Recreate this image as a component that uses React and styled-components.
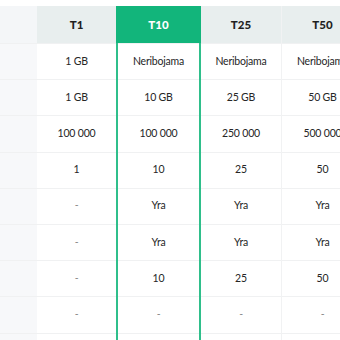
import React from "react";
import styled, { createGlobalStyle } from "styled-components";

const Global = createGlobalStyle`
  body {
    margin: 0;
    background: #fff;
    font-family: Lato, "Noto Sans", sans-serif;
    color: #2b2b2b;
  }
`;

const plans = [
  { name: "T1", values: ["1 GB", "1 GB", "100 000", "1", "-", "-", "-", "-", ""] },
  { name: "T10", values: ["Neribojama", "10 GB", "100 000", "10", "Yra", "Yra", "10", "-", ""], featured: true },
  { name: "T25", values: ["Neribojama", "25 GB", "250 000", "25", "Yra", "Yra", "25", "-", ""] },
  { name: "T50", values: ["Neribojama", "50 GB", "500 000", "50", "Yra", "Yra", "50", "-", ""] },
];

const Wrap = styled.div`
  width: 340px;
  height: 340px;
  overflow: hidden;
  padding-top: 6px;
  box-sizing: border-box;
`;

const Grid = styled.div`
  display: grid;
  grid-template-columns: 37px 79px 85px 81px 81px;
  width: 363px;
`;

const Column = styled.div`
  display: grid;
  grid-template-rows: 37px repeat(9, 36.2px);
  background: ${p => (p.$label ? "#f7f8fa" : "#fff")};
  border-left: ${p => (p.$featured ? "2px solid #2fbf8b" : "none")};
  border-right: ${p => (p.$featured ? "2px solid #2fbf8b" : p.$sep ? "1px solid #f1f2f3" : "none")};
`;

const Head = styled.div`
  display: flex;
  align-items: center;
  justify-content: center;
  font-size: 11.5px;
  font-weight: 900;
  color: ${p => (p.$featured ? "#fff" : "#1f1f1f")};
  background: ${p => (p.$featured ? "#12b57b" : p.$label ? "#f4f6f8" : "#e8eeee")};
  margin: ${p => (p.$featured ? "0 -2px" : "0")};
`;

const Cell = styled.div`
  display: flex;
  align-items: center;
  justify-content: center;
  padding-bottom: 2px;
  font-size: 10.5px;
  letter-spacing: -0.2px;
  color: ${p => (p.$dash ? "#8a8a8a" : "#262626")};
  border-top: 1px solid #f0f1f2;
  box-sizing: border-box;
  white-space: nowrap;
`;

export default function App() {
  return (
    <Wrap>
      <Global />
      <Grid>
        <Column $label>
          <Head $label />
          {plans[0].values.map((_, i) => (
            <Cell key={i} />
          ))}
        </Column>
        {plans.map((p, ci) => (
          <Column key={p.name} $featured={p.featured} $sep={ci === 2}>
            <Head $featured={p.featured}>{p.name}</Head>
            {p.values.map((v, i) => (
              <Cell key={i} $dash={v === "-"}>{v}</Cell>
            ))}
          </Column>
        ))}
      </Grid>
    </Wrap>
  );
}
